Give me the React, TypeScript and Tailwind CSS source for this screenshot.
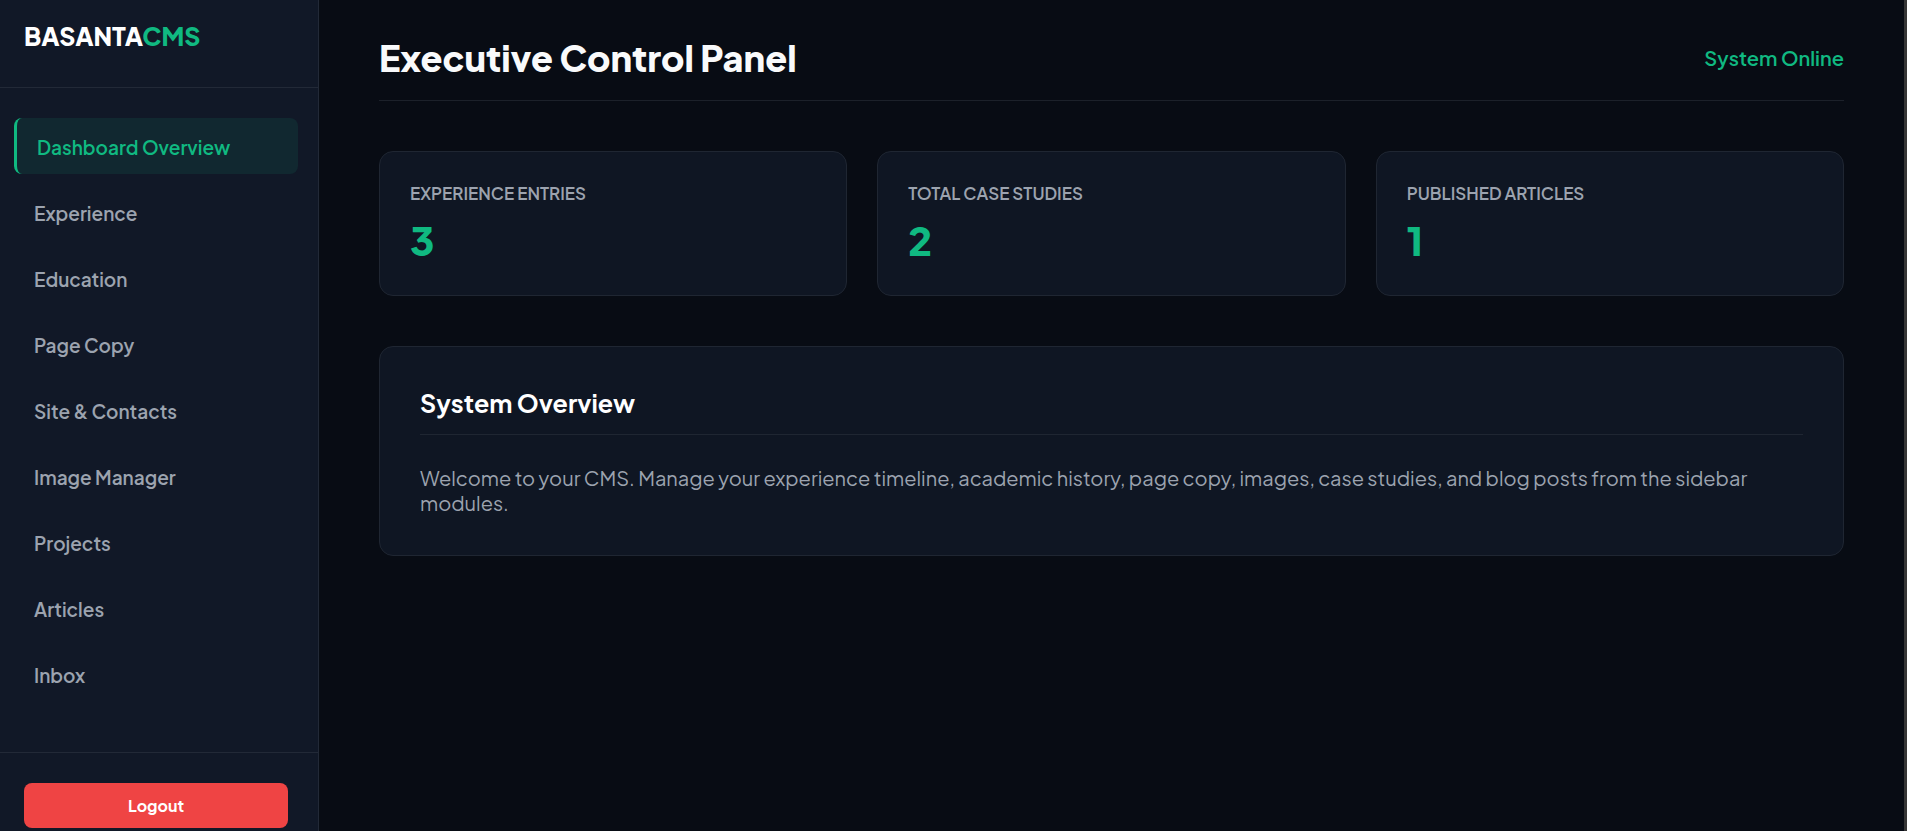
const navItems = [
  "Dashboard Overview",
  "Experience",
  "Education",
  "Page Copy",
  "Site & Contacts",
  "Image Manager",
  "Projects",
  "Articles",
  "Inbox",
];

const stats = [
  { label: "Experience Entries", value: 3 },
  { label: "Total Case Studies", value: 2 },
  { label: "Published Articles", value: 1 },
];

function Sidebar() {
  return (
    <aside className="flex w-[319px] shrink-0 flex-col overflow-hidden border-r border-[#222937] bg-[#111827]">
      <div className="border-b border-[#222937] px-6 pt-5 pb-[35px]">
        <div className="text-[25px] leading-8 font-extrabold text-white">
          BASANTA<span className="text-[#10b981]">CMS</span>
        </div>
      </div>
      <nav className="flex flex-col gap-2.5 pt-[30px] pr-5 pb-[50px] pl-3.5">
        {navItems.map((item, i) => (
          <a
            key={item}
            href="#"
            aria-current={i === 0 ? "page" : undefined}
            className={
              i === 0
                ? "rounded-lg border-l-3 border-[#10b981] bg-[#112830] px-5 pt-[15px] pb-[13px] text-[19px] leading-7 font-semibold text-[#10b981]"
                : "rounded-lg px-5 pt-[15px] pb-[13px] text-[19px] leading-7 font-semibold text-[#9ca3af]"
            }
          >
            {item}
          </a>
        ))}
      </nav>
      <div className="shrink-0 border-t border-[#222937] pt-[30px] pr-[30px] pb-6 pl-6">
        <button
          type="button"
          className="h-[45px] w-full rounded-lg bg-[#ef4444] text-base font-bold text-white"
        >
          Logout
        </button>
      </div>
    </aside>
  );
}

function StatCard({ label, value }: { label: string; value: number }) {
  return (
    <div className="rounded-[14px] border border-[#1f2632] bg-[#0f1623] px-[30px] pt-[30px] pb-8">
      <h3 className="text-[17px] leading-[22px] font-semibold text-[#9ca3af] uppercase">{label}</h3>
      <p className="mt-3 text-[40px] leading-[47px] font-extrabold text-[#10b981]">{value}</p>
    </div>
  );
}

export default function App() {
  return (
    <div className="flex h-screen overflow-hidden bg-[#080c14] font-['Plus_Jakarta_Sans',Inter,sans-serif]">
      <Sidebar />
      <main className="min-w-0 flex-1 px-[60px] pt-[34px]">
        <header className="flex items-center justify-between border-b border-[#1c212a] pb-[18px]">
          <h1 className="text-4xl leading-[48px] font-extrabold text-[#f9fafb]">Executive Control Panel</h1>
          <span className="text-xl font-semibold text-[#10b981]">System Online</span>
        </header>
        <section className="mt-[50px] grid grid-cols-3 gap-[30px]">
          {stats.map((s) => (
            <StatCard key={s.label} label={s.label} value={s.value} />
          ))}
        </section>
        <section className="mt-[50px] rounded-[14px] border border-[#1f2632] bg-[#0f1623] p-10">
          <h2 className="border-b border-[#1f2632] pb-[15px] text-[25px] leading-8 font-bold text-white">
            System Overview
          </h2>
          <p className="mt-[30px] text-xl leading-[25px] text-[#9ca3af]">
            Welcome to your CMS. Manage your experience timeline, academic history, page copy, images, case studies,
            and blog posts from the sidebar modules.
          </p>
        </section>
      </main>
      <div className="w-[3px] shrink-0 bg-[#363636]" />
    </div>
  );
}
